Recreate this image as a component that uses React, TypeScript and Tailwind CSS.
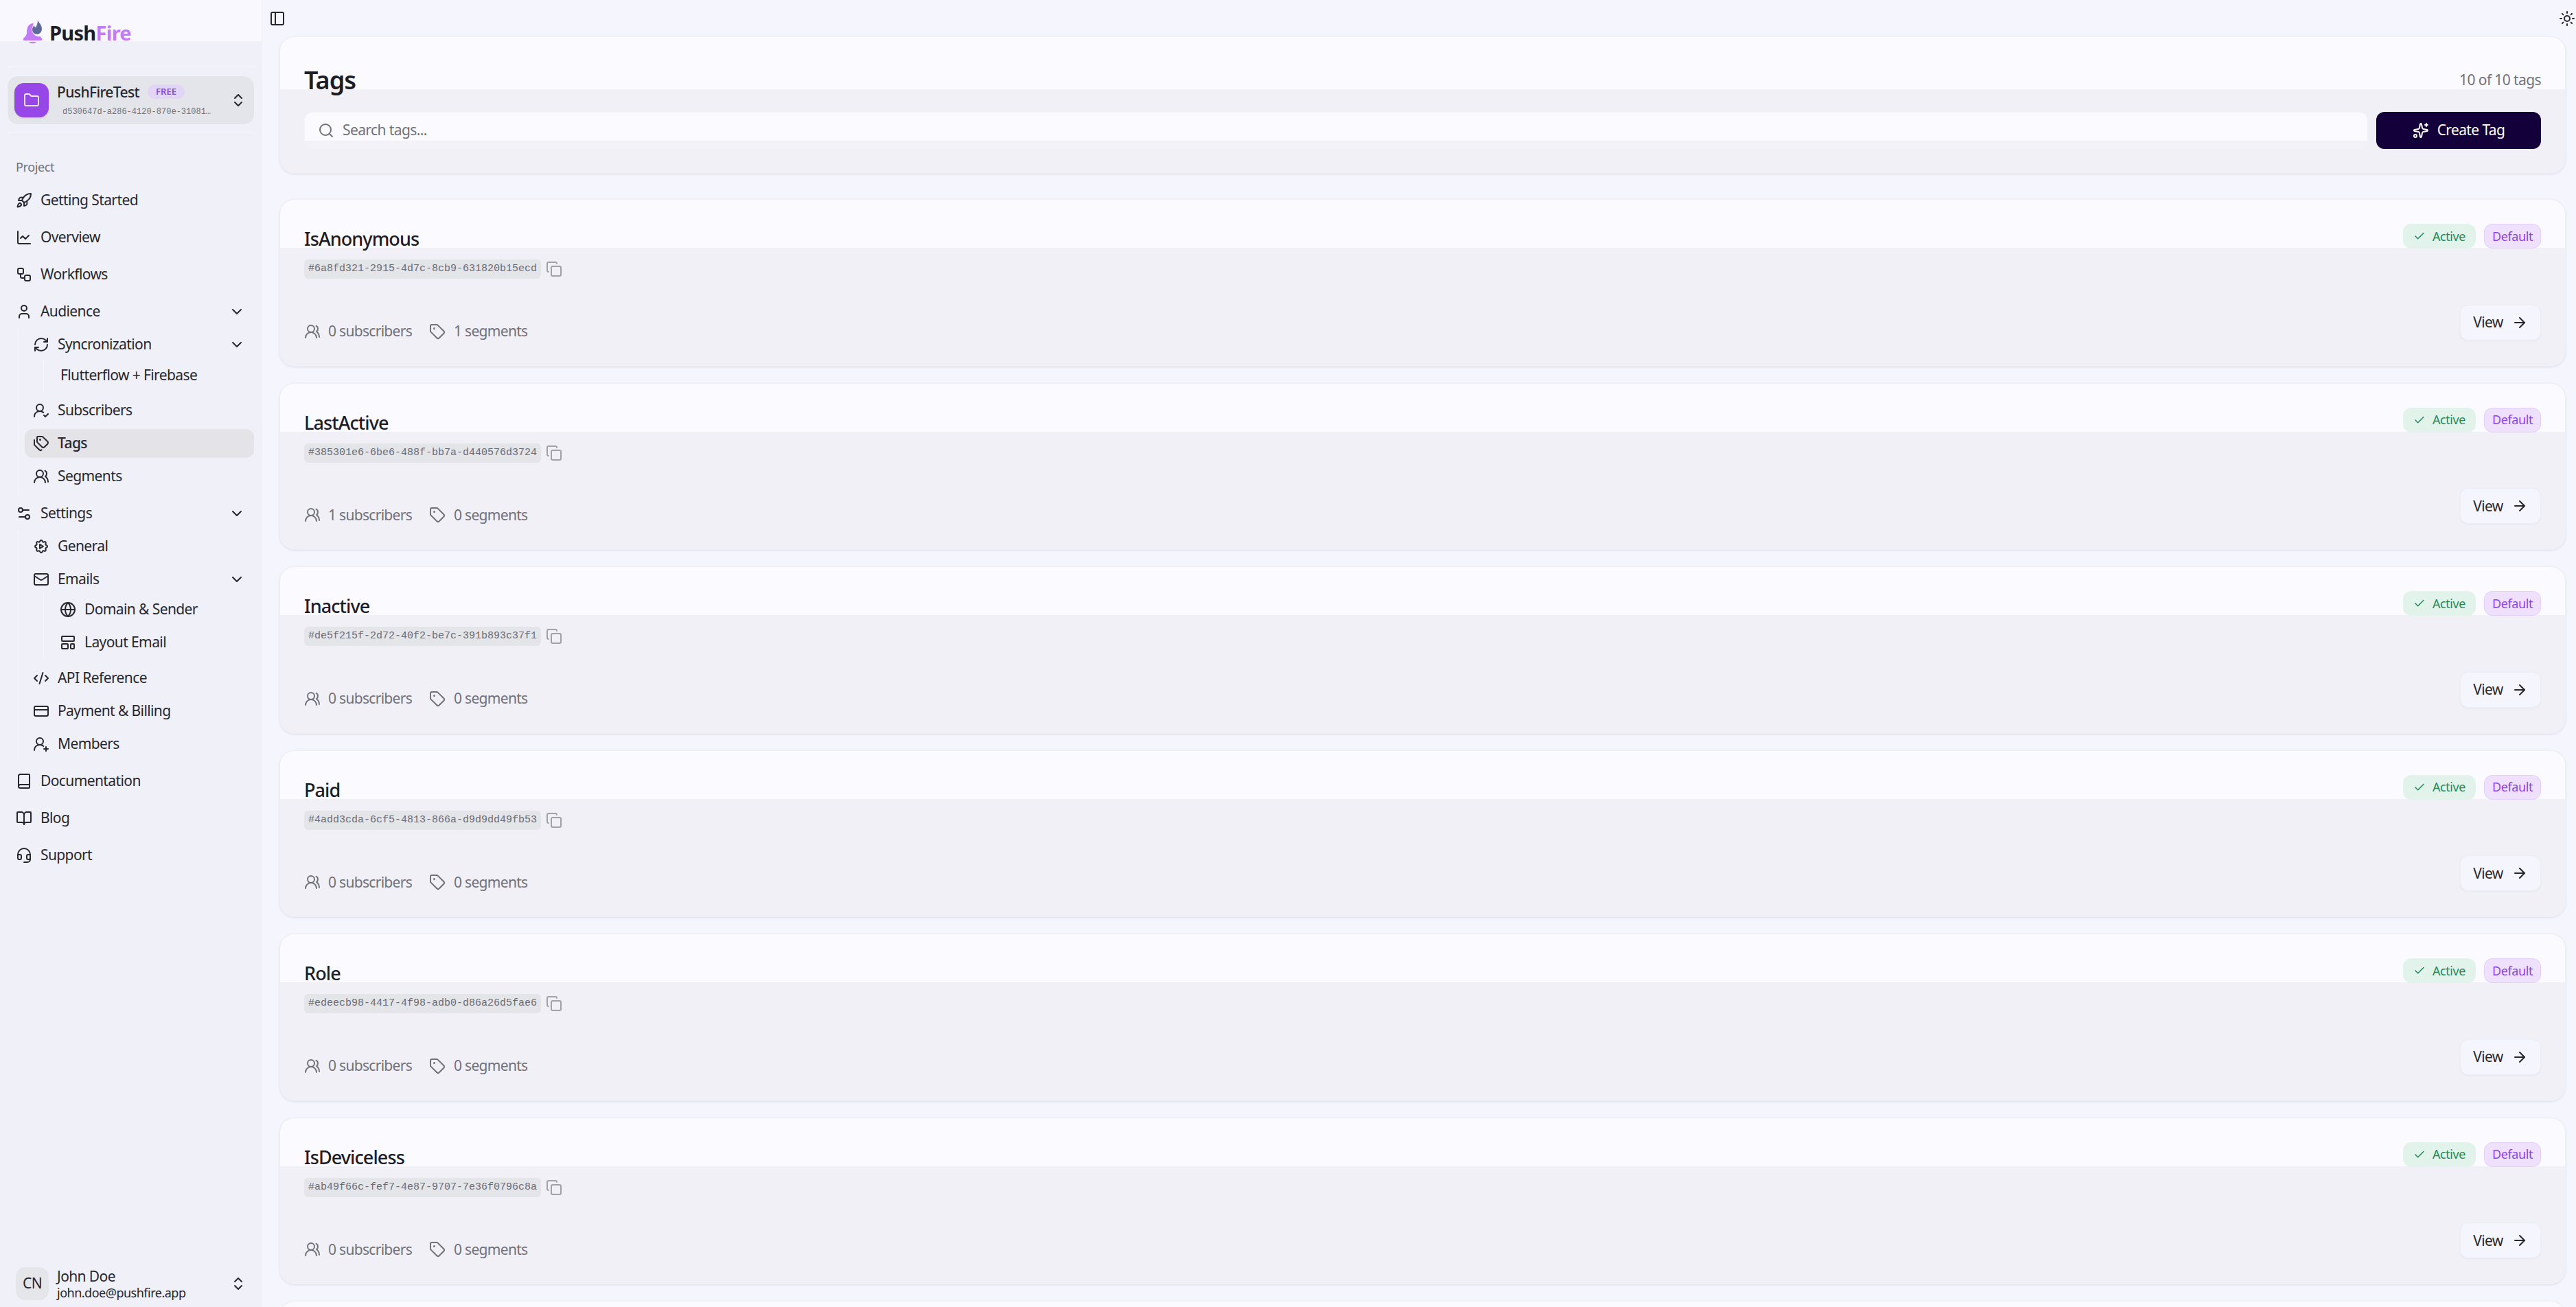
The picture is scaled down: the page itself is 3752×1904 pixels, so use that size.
import type { ReactNode } from 'react';
import {
  ArrowRight, Book, BookOpen, Check, ChevronDown, ChevronsUpDown, CodeXml, Copy, CreditCard,
  Folder, Globe, Headset, LayoutTemplate, ChartLine, Mail, PanelLeft, RefreshCw, Rocket, Search,
  Settings2, Sparkles, Sun, Tag, Tags, User, UserRoundCheck, UserRoundPlus, UsersRound, Workflow,
} from 'lucide-react';
import { TbSettingsAutomation } from 'react-icons/tb';

const sans = 'font-["Noto_Sans",sans-serif]';
const mono = 'font-["Liberation_Mono",monospace]';

const tags = [
  { name: 'IsAnonymous', id: '#6a8fd321-2915-4d7c-8cb9-631820b15ecd', subscribers: 0, segments: 1 },
  { name: 'LastActive', id: '#385301e6-6be6-488f-bb7a-d440576d3724', subscribers: 1, segments: 0 },
  { name: 'Inactive', id: '#de5f215f-2d72-40f2-be7c-391b893c37f1', subscribers: 0, segments: 0 },
  { name: 'Paid', id: '#4add3cda-6cf5-4813-866a-d9d9dd49fb53', subscribers: 0, segments: 0 },
  { name: 'Role', id: '#edeecb98-4417-4f98-adb0-d86a26d5fae6', subscribers: 0, segments: 0 },
  { name: 'IsDeviceless', id: '#ab49f66c-fef7-4e87-9707-7e36f0796c8a', subscribers: 0, segments: 0 },
];

const NavRow = ({ icon, label, chevron }: { icon: ReactNode; label: string; chevron?: boolean }) => (
  <div className="flex h-[48px] items-center gap-3 px-3 text-[21px] tracking-[-0.6px] text-[#27272f]">
    {icon}
    <span>{label}</span>
    {chevron && <ChevronDown size={24} className="ml-auto mr-[1px]" />}
  </div>
);

const SubRow = ({ icon, label, chevron, active }: { icon?: ReactNode; label: string; chevron?: boolean; active?: boolean }) => (
  <div className={`flex h-[42px] items-center gap-3 rounded-xl px-3 text-[21px] tracking-[-0.6px] text-[#27272f] ${active ? 'bg-[#e3e3e8] font-medium' : ''}`}>
    {icon}
    <span>{label}</span>
    {chevron && <ChevronDown size={24} className="ml-auto mr-[1px]" />}
  </div>
);

const Sidebar = () => (
  <aside className="flex h-full w-[382px] shrink-0 flex-col border-r border-[#f0f0f8] bg-[linear-gradient(#f9f8ff_60px,#eff0f8_60px)] text-[#27272f]">
    {/* Logo */}
    <div className="flex h-[97px] items-start gap-[9px] pl-[32px] pt-[28px]">
      <svg width="31" height="38" viewBox="0 0 31 38">
        <path d="M17 6C9 6 7 13 7 19c0 5-3 7-5 9-1 2 0 3 2 3h23c2 0 3-1 2-3-1-1-2-2-2-3-7 1-12-3-12-10 0-4 1-7 2-9z" fill="#c47bf7" />
        <path d="M10 33c3 3 8 3 11 0z" fill="#c47bf7" />
        <path d="M23 1c1 4 6 7 6 13 0 5-4 8-7 8-4 0-7-3-7-7 0-3 2-5 3-6 0 2 1 3 2 3 2-3 3-7 3-11z" fill="#5f6a9c" stroke="#f5f4fd" strokeWidth="1.5" paintOrder="stroke" />
      </svg>
      <span className={`${sans} mt-[2px] text-[29px] font-bold leading-[36px] tracking-[-0.7px] text-[#1d1d27]`}>
        Push<span className="text-[#c47bf7]">Fire</span>
      </span>
    </div>
    {/* Project switcher */}
    <div className="mx-[10px] flex h-[97px] flex-col justify-center border-y border-[#f7f7fc]">
      <div className="flex h-[72px] items-center gap-3 rounded-2xl border border-[#f3f3f9] bg-[#e4e5ea] pl-[10px] pr-[11px]">
        <div className="flex h-[50px] w-[50px] shrink-0 items-center justify-center rounded-[14px] bg-[#9747e8] shadow-sm">
          <Folder size={24} color="#f1e7fd" />
        </div>
        <div className="min-w-0 flex-1">
          <div className="flex items-center gap-3">
            <span className="text-[21px] font-medium tracking-[-0.6px] leading-[28px]">PushFireTest</span>
            <span className="rounded-[10px] bg-[#e2d5f5] px-3 text-[13px] font-semibold leading-[21px] text-[#8b45e6]">FREE</span>
          </div>
          <div className={`${mono} mt-[6px] pl-2 text-[12px] leading-[18px] text-[#71717a]`}>d530647d-a286-4120-870e-31081…</div>
        </div>
        <ChevronsUpDown size={24} className="shrink-0" />
      </div>
    </div>
    {/* Nav */}
    <div className="flex flex-1 flex-col px-[11px]">
      <div className="flex h-[74px] items-center px-3 pt-[25px] text-[18px] tracking-[-0.4px] text-[#71717a]">Project</div>
      <div className="flex flex-col gap-[6px]">
        <NavRow icon={<Rocket size={24} />} label="Getting Started" />
        <NavRow icon={<ChartLine size={24} />} label="Overview" />
        <NavRow icon={<Workflow size={24} />} label="Workflows" />
        <div>
          <NavRow icon={<User size={24} />} label="Audience" chevron />
          <div className="ml-[15px] flex flex-col gap-[6px] border-l border-[#f6f6fb] py-[3px] pl-[9px]">
            <div>
              <SubRow icon={<RefreshCw size={24} />} label="Syncronization" chevron />
              <div className="ml-[27px] flex h-[48px] items-center border-l border-[#f6f6fb] pl-[12px]">
                <SubRow label="Flutterflow + Firebase" />
              </div>
            </div>
            <SubRow icon={<UserRoundCheck size={24} />} label="Subscribers" />
            <SubRow icon={<Tags size={24} />} label="Tags" active />
            <SubRow icon={<UsersRound size={24} />} label="Segments" />
          </div>
        </div>
        <div>
          <NavRow icon={<Settings2 size={24} />} label="Settings" chevron />
          <div className="ml-[15px] flex flex-col gap-[6px] border-l border-[#f6f6fb] py-[3px] pl-[9px]">
            <SubRow icon={<TbSettingsAutomation size={24} />} label="General" />
            <div>
              <SubRow icon={<Mail size={24} />} label="Emails" chevron />
              <div className="ml-[27px] flex flex-col gap-[6px] border-l border-[#f6f6fb] pb-[4px] pt-[2px] pl-[11px]">
                <SubRow icon={<Globe size={24} />} label="Domain & Sender" />
                <SubRow icon={<LayoutTemplate size={24} />} label="Layout Email" />
              </div>
            </div>
            <SubRow icon={<CodeXml size={24} />} label="API Reference" />
            <SubRow icon={<CreditCard size={24} />} label="Payment & Billing" />
            <SubRow icon={<UserRoundPlus size={24} />} label="Members" />
          </div>
        </div>
        <NavRow icon={<Book size={24} />} label="Documentation" />
        <NavRow icon={<BookOpen size={24} />} label="Blog" />
        <NavRow icon={<Headset size={24} />} label="Support" />
      </div>
      {/* User */}
      <div className="mt-auto mb-[10px] flex items-center gap-3 pl-3 pr-[11px]">
        <div className="flex h-[48px] w-[48px] shrink-0 items-center justify-center rounded-[14px] bg-[#e5e6ea] text-[21px] tracking-[-0.6px]">CN</div>
        <div className="min-w-0 flex-1">
          <div className="text-[21px] leading-[26px] tracking-[-0.6px]">John Doe</div>
          <div className="text-[18px] leading-[22px] tracking-[-0.5px]">john.doe@pushfire.app</div>
        </div>
        <ChevronsUpDown size={24} className="shrink-0" />
      </div>
    </div>
  </aside>
);

const TagCard = ({ tag }: { tag?: (typeof tags)[number] }) => (
  <div className="h-[243.5px] shrink-0 rounded-[22px] border border-[#eeeef6] bg-[linear-gradient(#fafaff_70px,#f0f0f6_70px)] shadow-[0_1px_3px_#dcdce6]">
    {tag && (
      <div className="flex h-full flex-col px-[35px]">
        <div className="flex h-[87px] justify-between pt-[35px]">
          <h3 className="text-[27px] font-medium leading-[44px] tracking-[-0.9px] text-[#1d1d27]">{tag.name}</h3>
          <div className="flex gap-3">
            <span className="flex h-[36px] w-[106px] items-center justify-center gap-[10px] rounded-xl bg-[#e2f3ec] text-[18px] tracking-[-0.4px] text-[#1f8a55]">
              <Check size={18} />
              Active
            </span>
            <span className="flex h-[36px] w-[83px] items-center justify-center rounded-xl border border-[#e2cffa] bg-[#efe0fd] text-[18px] tracking-[-0.4px] text-[#8b45e6]">
              Default
            </span>
          </div>
        </div>
        <div className="flex items-center gap-[7px]">
          <code className={`${mono} rounded-md bg-[#e4e5e9] px-[6px] text-[15px] leading-[28px] text-[#6b6b74]`}>{tag.id}</code>
          <Copy size={24} color="#a1a1aa" />
        </div>
        <div className="mt-[35px] flex items-center justify-between">
          <div className="flex items-center pt-[26px] text-[21px] tracking-[-0.7px] text-[#71717a]">
            <UsersRound size={24} />
            <span className="ml-[11px]">{tag.subscribers} subscribers</span>
            <Tag size={24} className="ml-[25px]" />
            <span className="ml-[12px]">{tag.segments} segments</span>
          </div>
          <button className="flex h-[52px] w-[118px] items-center justify-center gap-3 rounded-xl border border-[#ecedf5] bg-[#f5f5fe] text-[21px] tracking-[-0.6px] text-[#27272f] shadow-[0_1px_2px_#e6e6ee]">
            View
            <ArrowRight size={24} />
          </button>
        </div>
      </div>
    )}
  </div>
);

export default function App() {
  return (
    <div className={`${sans} flex h-screen w-full overflow-hidden bg-[#f5f5fe]`}>
      <Sidebar />
      <main className="flex min-w-0 flex-1 flex-col">
        <div className="flex h-[53px] shrink-0 items-center justify-between pl-[10px] pr-[1px] text-[#27272f]">
          <PanelLeft size={24} />
          <Sun size={24} />
        </div>
        <div className="ml-[25px] mr-[15px] flex flex-col gap-[37px]">
          <section className="h-[200px] shrink-0 rounded-[22px] border border-[#eeeef6] bg-[linear-gradient(#fafaff_76px,#f0f0f6_76px)] px-[35px] shadow-[0_1px_3px_#dcdce6]">
            <div className="flex h-[60px] mt-[33px] mb-[16px] items-center justify-between">
              <h1 className="text-[36px] font-semibold leading-[60px] tracking-[-1px] text-[#1d1d27]">Tags</h1>
              <span className="text-[21px] tracking-[-0.6px] text-[#71717a]">10 of 10 tags</span>
            </div>
            <div className="flex gap-3">
              <div className="flex h-[54px] flex-1 items-center gap-3 rounded-xl border border-[#f3f3f9] bg-[linear-gradient(#fafaff_41px,#f2f2f8_41px)] pl-[19px] text-[21px] tracking-[-0.6px] text-[#71717a]">
                <Search size={24} />
                Search tags...
              </div>
              <button className="flex h-[54px] w-[240px] items-center justify-center gap-3 rounded-xl bg-[#13003a] text-[21px] tracking-[-0.6px] text-white">
                <Sparkles size={24} />
                Create Tag
              </button>
            </div>
          </section>
          <div className="flex flex-col gap-[24px]">
            {tags.map((tag) => (
              <TagCard key={tag.id} tag={tag} />
            ))}
            <TagCard />
          </div>
        </div>
      </main>
    </div>
  );
}
